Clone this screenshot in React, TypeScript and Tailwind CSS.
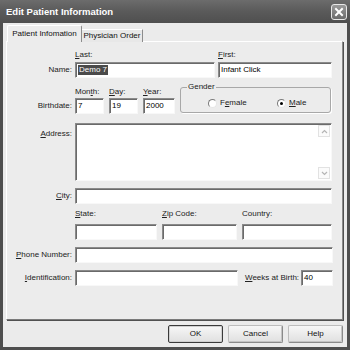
import React from "react";

// classic sunken edit box
const sunken =
  "bg-white border border-t-[#8a8a8a] border-l-[#8a8a8a] border-r-[#f8f8f8] border-b-[#f8f8f8] shadow-[inset_1px_1px_0_#6a6a6a]";

function Field({ w, children }: { w: string; children?: React.ReactNode }) {
  return <div className={`${sunken} ${w} h-[16px] shrink-0 flex items-center pl-[2px] text-black`}>{children}</div>;
}

function Label({ children }: { children: React.ReactNode }) {
  return <div className="w-[65px] shrink-0 text-right text-[#222]">{children}</div>;
}

function U({ children }: { children: React.ReactNode }) {
  return <span className="underline underline-offset-[1px]">{children}</span>;
}

function Radio({ checked }: { checked?: boolean }) {
  return (
    <span className="w-[9px] h-[9px] rounded-full bg-white border border-t-[#7a7a7a] border-l-[#7a7a7a] border-r-[#e6e6e6] border-b-[#e6e6e6] flex items-center justify-center">
      {checked && <span className="w-[3px] h-[3px] rounded-full bg-black" />}
    </span>
  );
}

function ScrollArrow({ up }: { up?: boolean }) {
  return (
    <div className="w-[12px] h-[12px] border border-[#e2e2e2] bg-[#fbfbfb] flex items-center justify-center">
      <svg width="7" height="5" viewBox="0 0 7 5">
        <path d={up ? "M1 4 L3.5 1.5 L6 4" : "M1 1 L3.5 3.5 L6 1"} fill="none" stroke="#b5b5b5" strokeWidth="1.2" />
      </svg>
    </div>
  );
}

function Btn({ children, main }: { children: React.ReactNode; main?: boolean }) {
  return (
    <button
      className={`w-[55px] h-[18px] rounded-[2px] bg-linear-to-b from-[#f7f7f7] to-[#e0e0e0] text-[#111] ${
        main
          ? "border border-[#3a3a3a] shadow-[inset_0_0_0_1px_#cfcfcf]"
          : "border border-[#8a8a8a] border-t-[#bdbdbd] border-l-[#bdbdbd] shadow-[inset_-1px_-1px_0_#c4c4c4]"
      }`}
    >
      {children}
    </button>
  );
}

export default function App() {
  return (
    <div className="w-[350px] h-[350px] bg-[#4e4e4e] flex flex-col font-['Liberation_Sans',Arial,sans-serif] text-[8px] leading-[10px] overflow-hidden">
      {/* title bar */}
      <div className="h-[23px] shrink-0 flex items-center justify-between bg-linear-to-b from-[#6c6c6c] via-[#5a5a5a] to-[#4f4f4f]">
        <span className="pl-[6px] text-white font-bold text-[9.5px]">Edit Patient Information</span>
        <div className="mr-[3px] w-[16px] h-[16px] rounded-[3px] border border-[#e8e8e8] bg-linear-to-b from-[#9a9a9a] to-[#6c6c6c] flex items-center justify-center">
          <svg width="10" height="10" viewBox="0 0 10 10">
            <path d="M2 2 L8 8 M8 2 L2 8" stroke="#fff" strokeWidth="2" strokeLinecap="square" />
          </svg>
        </div>
      </div>

      {/* dialog body */}
      <div className="mx-[3px] h-[324px] bg-[#ebebeb] px-[3px] pt-[3px] flex flex-col">
        {/* tabs */}
        <div className="flex items-end h-[16px] -mb-[1px] pl-[1px] relative z-10">
          <div className="w-[75px] h-[17px] bg-[#ececec] border-t border-l border-white border-r border-r-[#8c8c8c] rounded-t-[2px] flex items-center justify-center text-[#111] pb-[1px]">
            Patient Infomation
          </div>
          <div className="w-[61px] h-[13px] bg-[#e8e8e8] border-t border-t-white border-r border-r-[#8c8c8c] flex items-center justify-center text-[#111]">
            Physician Order
          </div>
        </div>

        {/* tab panel */}
        <div className="w-[337px] h-[279px] bg-[#ececec] border border-t-white border-l-white border-r-[#8a8a8a] border-b-[#7a7a7a] shadow-[1px_1px_0_#505050] pt-[8px] flex flex-col">
          {/* Last / First labels */}
          <div className="flex h-[10px] text-[#222]">
            <div className="w-[68px] shrink-0" />
            <div className="w-[143px] shrink-0">
              <U>L</U>ast:
            </div>
            <div>
              <U>F</U>irst:
            </div>
          </div>

          {/* name */}
          <div className="flex items-center mt-[2px] h-[16px]">
            <Label>Name:</Label>
            <div className="ml-[3px] flex gap-[3px]">
              <Field w="w-[140px]">
                <span className="bg-[#4a4a4a] text-white px-[1px] leading-[10px]">Demo 7</span>
              </Field>
              <Field w="w-[114px]">Infant Click</Field>
            </div>
          </div>

          {/* birthdate + gender */}
          <div className="flex items-end mt-[4px] h-[32px]">
            <div className="h-[16px] flex items-center">
              <Label>Birthdate:</Label>
            </div>
            <div className="ml-[3px] flex flex-col">
              <span className="text-[#222]">
                Mon<U>t</U>h:
              </span>
              <div className="mt-[1px]">
                <Field w="w-[29px]">7</Field>
              </div>
            </div>
            <div className="ml-[5px] flex flex-col">
              <span className="text-[#222]">
                <U>D</U>ay:
              </span>
              <div className="mt-[1px]">
                <Field w="w-[29px]">19</Field>
              </div>
            </div>
            <div className="ml-[5px] flex flex-col">
              <span className="text-[#222]">
                <U>Y</U>ear:
              </span>
              <div className="mt-[1px]">
                <Field w="w-[32px]">2000</Field>
              </div>
            </div>
            <fieldset className="self-start ml-[5px] w-[151px] h-[31px] border border-[#a8a8a8] rounded-[3px] shadow-[1px_1px_0_#fff] px-[6px]">
              <legend className="px-[1px] text-[#222]">Gender</legend>
              <div className="flex items-center mt-[6px] pl-[21px]">
                <div className="w-[69px] flex items-center gap-[3px]">
                  <Radio />
                  <span className="text-[#222]">
                    F<U>e</U>male
                  </span>
                </div>
                <div className="flex items-center gap-[3px]">
                  <Radio checked />
                  <span className="text-[#222]">
                    <U>M</U>ale
                  </span>
                </div>
              </div>
            </fieldset>
          </div>

          {/* address */}
          <div className="flex items-start mt-[9px]">
            <div className="pt-[6px]">
              <Label>
                <U>A</U>ddress:
              </Label>
            </div>
            <div className={`${sunken} ml-[3px] w-[257px] h-[58px] flex justify-end`}>
              <div className="flex flex-col justify-between py-[1px] pr-[1px]">
                <ScrollArrow up />
                <ScrollArrow />
              </div>
            </div>
          </div>

          {/* city */}
          <div className="flex items-center mt-[7px]">
            <Label>
              <U>C</U>ity:
            </Label>
            <div className="ml-[3px]">
              <Field w="w-[257px]" />
            </div>
          </div>

          {/* state / zip / country labels */}
          <div className="flex h-[10px] mt-[5px] text-[#222]">
            <div className="w-[68px] shrink-0" />
            <div className="w-[87px] shrink-0">
              <U>S</U>tate:
            </div>
            <div className="w-[80px] shrink-0">
              <U>Z</U>ip Code:
            </div>
            <div>Country:</div>
          </div>

          <div className="flex mt-[5px] ml-[68px] gap-[5px]">
            <Field w="w-[82px]" />
            <Field w="w-[75px]" />
            <Field w="w-[90px]" />
          </div>

          {/* phone */}
          <div className="flex items-center mt-[7px]">
            <Label>
              <U>P</U>hone Number:
            </Label>
            <div className="ml-[3px]">
              <Field w="w-[258px]" />
            </div>
          </div>

          {/* identification / weeks */}
          <div className="flex items-center mt-[7px]">
            <Label>
              <U>I</U>dentification:
            </Label>
            <div className="ml-[3px]">
              <Field w="w-[163px]" />
            </div>
            <span className="ml-[7px] text-[#222]">
              <U>W</U>eeks at Birth:
            </span>
            <div className="ml-[2px]">
              <Field w="w-[32px]">40</Field>
            </div>
          </div>
        </div>

        {/* buttons */}
        <div className="w-[337px] mt-[5px] flex justify-end gap-[5px]">
          <Btn main>OK</Btn>
          <Btn>Cancel</Btn>
          <Btn>Help</Btn>
        </div>
      </div>
    </div>
  );
}
